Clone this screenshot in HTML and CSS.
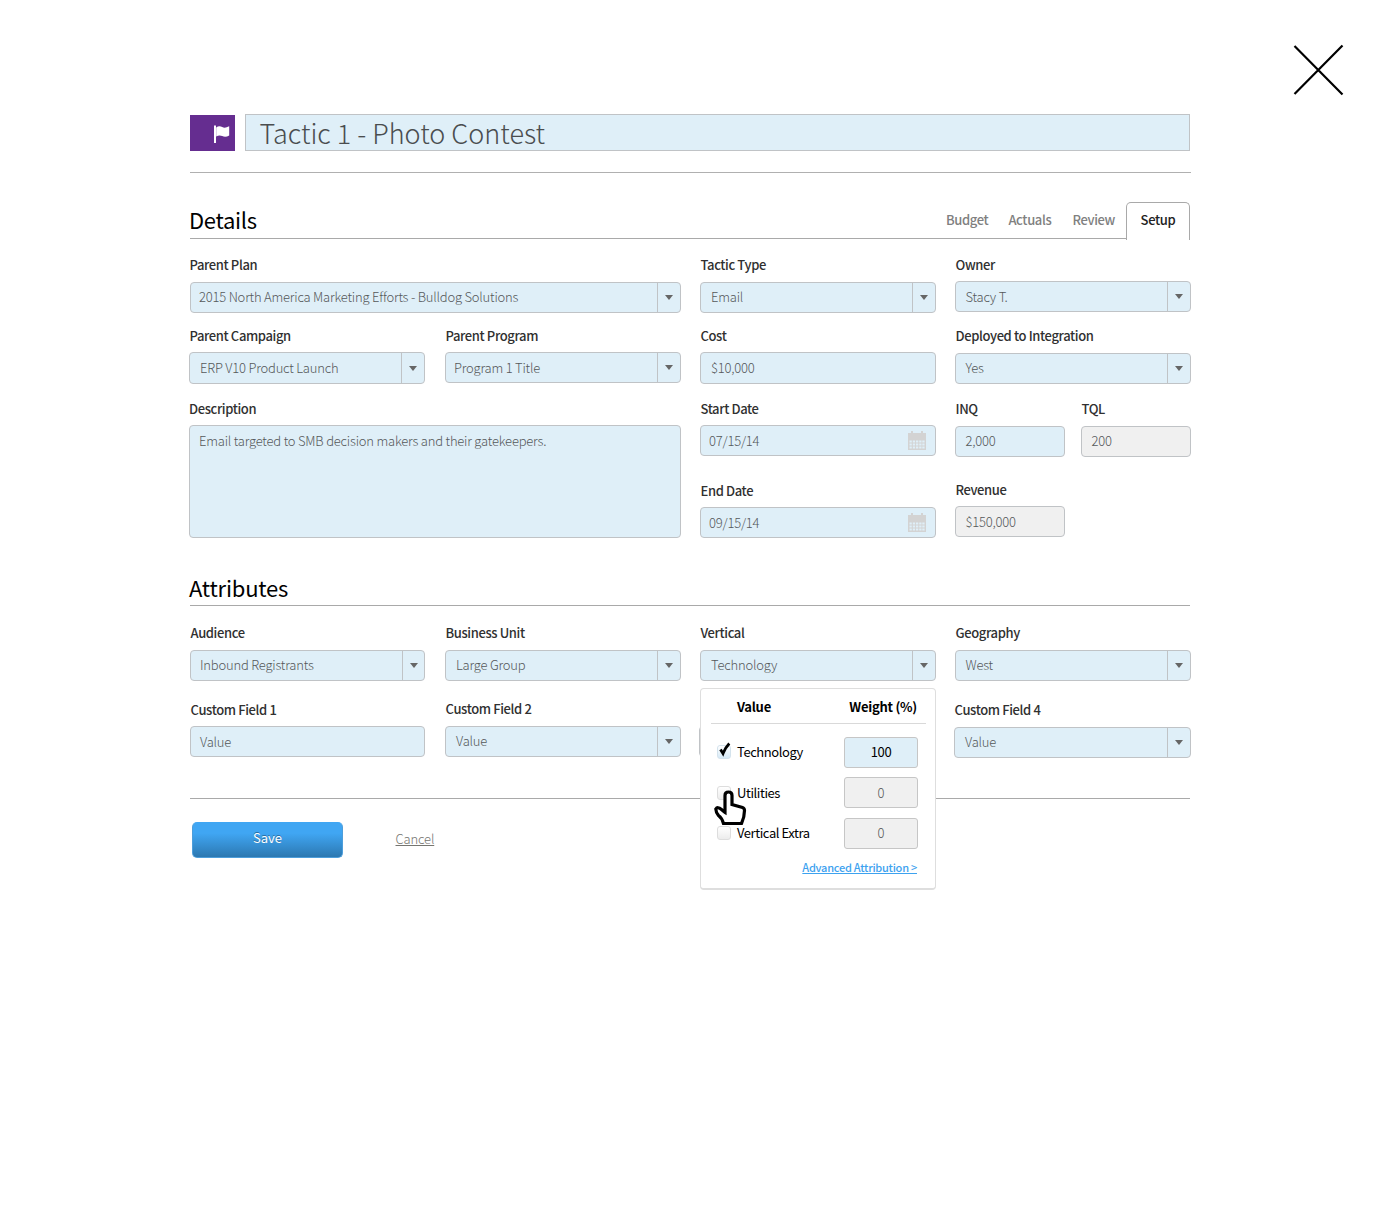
FILE: index.html
```html
<!DOCTYPE html>
<html lang="en">
<head>
<meta charset="utf-8">
<title>Tactic 1 - Photo Contest</title>
<link rel="stylesheet" href="styles.css">
</head>
<body>
<svg class="close" viewBox="0 0 52 52"><path d="M1.500 2 L49.500 50.500 M49.500 1.500 L1.500 50" fill="none" stroke="#000" stroke-width="2.200"/></svg>
<main class="page">
  <header class="title-row">
    <div class="badge"><svg width="18" height="19" viewBox="0 0 18 19"><path fill="#fff" d="M1 .5h2v17.500H1zM3.200 2.500c2-1.500 4-1.500 6-.4 2 .9 4 .7 7-.8v9.200c-2.600 1.500-5 1.500-7 .5-2-.9-4-.8-6 .6z"/></svg></div>
    <div class="title"><span>Tactic 1 - Photo Contest</span></div>
  </header>

  <section class="section-head details-head">
    <h2>Details</h2>
    <nav class="tabs"><a class="t1">Budget</a><a class="t2">Actuals</a><a class="t3">Review</a><a class="active">Setup</a></nav>
  </section>

  <section class="details">
    <div class="field plan"><label>Parent Plan</label><div class="box select"><span>2015 North America Marketing Efforts - Bulldog Solutions</span><i></i></div></div>
    <div class="field"><label>Tactic Type</label><div class="box select"><span>Email</span><i></i></div></div>
    <div class="field raised last"><label>Owner</label><div class="box select"><span>Stacy T.</span><i></i></div></div>

    <div class="field raised campaign"><label>Parent Campaign</label><div class="box select tall"><span>ERP V10 Product Launch</span><i></i></div></div>
    <div class="field raised"><label>Parent Program</label><div class="box select narrow-pad"><span>Program 1 Title</span><i></i></div></div>
    <div class="field raised"><label>Cost</label><div class="box tall"><span>$10,000</span></div></div>
    <div class="field last"><label>Deployed to Integration</label><div class="box select"><span>Yes</span><i></i></div></div>

    <div class="field description raised"><label>Description</label><div class="box area"><span>Email targeted to SMB decision makers and their gatekeepers.</span></div></div>
    <div class="field raised"><label>Start Date</label><div class="box date"><span>07/15/14</span><svg class="cal" viewBox="0 0 18 19"><use href="#cal"/></svg></div></div>
    <div class="pair">
      <div class="field last"><label>INQ</label><div class="box"><span>2,000</span></div></div>
      <div class="field last"><label>TQL</label><div class="box disabled"><span>200</span></div></div>
    </div>
    <div class="field end-date raised"><label>End Date</label><div class="box date"><span>09/15/14</span><svg class="cal" viewBox="0 0 18 19"><use href="#cal"/></svg></div></div>
    <div class="pair revenue">
      <div class="field last raised"><label>Revenue</label><div class="box disabled"><span>$150,000</span></div></div>
    </div>
  </section>

  <section class="section-head attributes-head"><h2>Attributes</h2></section>

  <section class="attributes">
    <div class="field first"><label>Audience</label><div class="box select"><span>Inbound Registrants</span><i></i></div></div>
    <div class="field"><label>Business Unit</label><div class="box select"><span>Large Group</span><i></i></div></div>
    <div class="field"><label>Vertical</label><div class="box select"><span>Technology</span><i></i></div></div>
    <div class="field last"><label>Geography</label><div class="box select"><span>West</span><i></i></div></div>
    <div class="field first raised"><label>Custom Field 1</label><div class="box"><span>Value</span></div></div>
    <div class="field cf2"><label>Custom Field 2</label><div class="box select"><span>Value</span><i></i></div></div>
    <div class="field cf3"><div class="box select"></div></div>
    <div class="field cf4"><label>Custom Field 4</label><div class="box select"><span>Value</span><i></i></div></div>
  </section>

  <footer class="actions"><button>Save</button><a>Cancel</a></footer>
</main>

<div class="popover">
  <div class="pop-head"><b>Value</b><b>Weight (%)</b></div>
  <div class="pop-row"><div class="check on"><svg viewBox="0 0 14 15"><path d="M2.500 7.500 L5 11.500 Q7 6 11.300 1.500" fill="none" stroke="#000" stroke-width="2.800"/></svg></div><span>Technology</span><div class="weight on">100</div></div>
  <div class="pop-row"><div class="check"></div><span>Utilities</span><div class="weight">0</div></div>
  <div class="pop-row"><div class="check"></div><span>Vertical Extra</span><div class="weight low">0</div></div>
  <a class="advanced">Advanced Attribution &gt;</a>
  <svg class="hand" viewBox="0 0 34 36"><path d="M11 19.500V5.500Q11 2 14.500 2T18 5.500V14.500L28.500 17.500Q30.500 18.200 30.500 20.500Q30.500 27 27.500 33.500H9.500Q8 28 4.500 25.500Q2 23 1.800 19Q3.500 16.200 7.500 19.500Q9.800 21.500 11 22.300Z" fill="#fff" stroke="#000" stroke-width="3.200"/></svg>
</div>

<svg width="0" height="0" class="defs"><defs><g id="cal" fill="#d3d3d3"><path d="M0 2h18v6H0zM3 0h2v3H3zM13 0h2v3h-2z"/><path fill-rule="evenodd" d="M0 8h18V19H0zM1.500 9.500v2h2.300v-2zM4.800 9.500v2h2.300v-2zM8 9.500v2h2.300v-2zM11.200 9.500v2h2.300v-2zM14.300 9.500v2h2.300v-2zM1.500 12.500v2h2.300v-2zM4.800 12.500v2h2.300v-2zM8 12.500v2h2.300v-2zM11.200 12.500v2h2.300v-2zM14.300 12.500v2h2.300v-2zM1.500 15.500v2h2.300v-2zM4.800 15.500v2h2.300v-2zM8 15.500v2h2.300v-2zM11.200 15.500v2h2.300v-2zM14.300 15.500v2h2.300v-2z"/></g></defs></svg>
</body>
</html>
```
FILE: styles.css
```css
* { box-sizing: border-box; }
body { margin: 0; position: relative; height: 1220px; background: #fff; color: #2b2b2b; font: 13px/20px "Noto Sans CJK SC", "Source Sans Pro", sans-serif; }
.defs { position: absolute; }
.close { position: absolute; left: 1293px; top: 44px; width: 52px; height: 52px; }
.page { width: 1001px; margin-left: 190px; padding-top: 114px; }

.title-row { display: flex; gap: 10px; height: 59px; border-bottom: 1px solid #b0b0b0; }
.badge { width: 45px; height: 36px; margin-top: 1px; background: #652d90; padding: 10px 0 0 23px; }
.badge svg { display: block; }
.title { width: 945px; height: 37px; border: 1px solid #c0c3c6; background: #dfeff8; padding-left: 13.500px; font-size: 27px; line-height: 36px; font-weight: 300; color: #4a4d4f; }

.section-head { display: flex; justify-content: space-between; width: 1000px; border-bottom: 1px solid #a9a9a9; }
h2 { margin: 0 0 0 -1px; font-size: 22px; font-weight: 400; color: #000; letter-spacing: -.2px; }
.details-head { height: 37px; margin-top: 29px; margin-bottom: 16px; }
.details-head h2 { line-height: 34px; letter-spacing: -.3px; }
.tabs { display: flex; color: #808080; font-weight: 500; line-height: 36px; letter-spacing: -.35px; }
.tabs a { margin-right: 20px; }
.tabs .t2 { margin-right: 21px; }
.tabs .t3 { margin-right: 11px; }
.tabs .active { width: 64px; height: 38px; margin: 0; border: 1px solid #a9a9a9; border-bottom: 0; border-radius: 5px 5px 0 0; background: #fff; color: #222; line-height: 34px; text-align: center; }

.details, .attributes { display: grid; grid-template-columns: repeat(4, 236px); column-gap: 19px; }
.details { grid-template-rows: 71px 73px 82px 83px; }
.field { display: flex; flex-direction: column; gap: 7px; }
.field label { height: 20px; color: #303030; font-weight: 500; letter-spacing: -.38px; white-space: nowrap; padding-left: .5px; }
.plan { grid-column: span 2; }
.plan label { margin-left: -1px; }
.campaign { margin-left: -1px; width: 236px; }
.description { grid-column: span 2; grid-row: span 2; margin-left: -1px; }
.description label { padding-left: 0; }
.raised { gap: 6px; }
.revenue { margin-top: -1px; }
.box { display: flex; flex: none; height: 31px; border: 1px solid #c0c3c6; border-radius: 4px; background: #dfeff8; color: #55585a; font-weight: 300; letter-spacing: -.21px; line-height: 28px; padding-left: 10px; }
.raised .box { line-height: 30px; }
.last .box { padding-left: 9.500px; }
.tall { height: 32px; }
.area { height: 113px; }
.description .box { padding-left: 9px; }
.plan .box, .box.narrow-pad, .date { padding-left: 8px; }
.box.disabled { background: #f0f0f0; }
.select { justify-content: space-between; }
.select i { display: flex; width: 23px; border-left: 1px solid #c0c3c6; justify-content: center; align-items: center; }
.select i::before { content: ""; border: 4.500px solid transparent; border-top: 5px solid #666; border-bottom: 0; }
.cal { width: 18px; height: 19px; margin: 5px 9px 0 auto; }
.pair { display: grid; grid-template-columns: 110px 110px; column-gap: 16px; }

.attributes-head { height: 33px; margin-top: 9px; margin-bottom: 17px; }
.attributes-head h2 { line-height: 28px; }
.attributes { grid-template-rows: 77px 98px; }
.attributes .first { width: 235px; }
.attributes .first .box { padding-left: 9px; }
.attributes .first i { width: 22px; }
.cf2 { gap: 7px; margin-top: -1px; }
.cf3 { margin-left: -1px; padding-top: 26px; }
.cf4 { margin-left: -1px; }

.actions { display: flex; width: 1000px; border-top: 1px solid #a9a9a9; padding: 23px 0 0 2px; }
button { display: block; width: 151px; height: 36px; border: 1px solid #4d9edb; border-top-color: #40a6f3; border-radius: 5px; background: linear-gradient(#40a6f3 30%, #2c78b1); color: #fff; font: inherit; line-height: 28px; text-shadow: 0 -1px #2c6fa3; padding: 0 0 4px; }
.actions a { margin: 7px 0 0 52.500px; color: #757570; text-decoration: underline; font-weight: 300; letter-spacing: -.15px; }

.popover { position: absolute; left: 700px; top: 688px; width: 236px; height: 202px; border: 1px solid #dedede; border-width: 1px 1px 2px; border-radius: 4px; background: #fff; color: #000; padding: 0 9px 0 10px; }
.pop-head { display: flex; justify-content: space-between; height: 35px; border-bottom: 1px solid #d9d9d9; padding: 8px 9px 0 26px; margin-bottom: 8px; letter-spacing: -.25px; }
.pop-row { display: flex; align-items: center; height: 40.500px; padding: 0 8px 0 6px; }
.pop-row span { flex: 1; padding-left: 6px; letter-spacing: -.43px; }
.check { position: relative; width: 14px; height: 14px; border: 1px solid #ddd; border-radius: 3px; background: linear-gradient(#fff, #ececec); }
.check.on { border-color: #d4e3ed; background: linear-gradient(#fff, #d5e9f6); }
.check svg { position: absolute; left: 0; top: -4px; width: 14px; height: 15px; }
.weight { width: 74px; height: 31px; border: 1px solid #c6c6c6; border-radius: 3px; background: #f0f0f0; color: #555; line-height: 30px; text-align: center; font-weight: 300; }
.weight.low { line-height: 28px; }
.weight.on { background: #dfeff8; color: #000; font-weight: 400; letter-spacing: -.3px; line-height: 28px; }
.advanced { display: block; width: max-content; margin: 3px 9px 0 auto; color: #3da2ef; font-size: 11px; font-weight: 500; letter-spacing: -.25px; text-decoration: underline; }
.hand { position: absolute; left: 13px; top: 101px; width: 34px; height: 36px; }
```
